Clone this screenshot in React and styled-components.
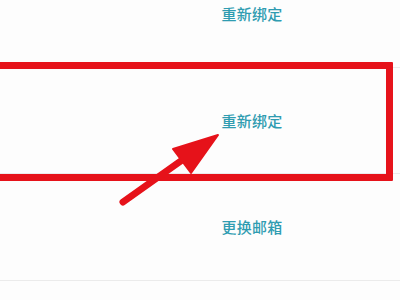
import React from "react";
import styled, { createGlobalStyle } from "styled-components";

const Global = createGlobalStyle`
  html, body { margin: 0; padding: 0; background: #fdfdfd; }
  body { width: 400px; height: 300px; overflow: hidden; }
`;

const Page = styled.div`
  position: relative;
  width: 400px;
  height: 300px;
  overflow: hidden;
  background: #fdfdfd;
  font-family: "Noto Sans CJK SC", "Noto Sans", sans-serif;
`;

const List = styled.div`
  display: flex;
  flex-direction: column;
  margin-top: -39px;
`;

const Row = styled.div`
  box-sizing: border-box;
  display: grid;
  grid-template-columns: 192px 120px 1fr;
  align-items: center;
  height: 106.5px;
  border-bottom: 1.5px solid #ebebeb;
`;

const Action = styled.a`
  grid-column: 2;
  text-align: center;
  font-size: 15px;
  font-weight: 500;
  color: #2f9cb1;
  text-decoration: none;
  letter-spacing: 0.3px;
`;

const Highlight = styled.div`
  position: absolute;
  box-sizing: border-box;
  left: -12px;
  top: 62px;
  width: 405px;
  height: 119px;
  border: 7px solid #e6121a;
  border-radius: 1px;
`;

const Arrow = styled.svg`
  position: absolute;
  left: 0;
  top: 0;
`;

export default function App() {
  const rows = ["重新绑定", "重新绑定", "更换邮箱"];
  return (
    <Page>
      <Global />
      <List>
        {rows.map((t, i) => (
          <Row key={i}>
            <Action>{t}</Action>
          </Row>
        ))}
      </List>
      <Highlight />
      <Arrow width="400" height="300" viewBox="0 0 400 300">
        <line x1="123" y1="202" x2="185" y2="158" stroke="#e6121a" strokeWidth="7" strokeLinecap="round" />
        <polygon points="218,135 173,149 191,173" fill="#e6121a" stroke="#e6121a" strokeWidth="2" strokeLinejoin="round" />
      </Arrow>
    </Page>
  );
}
